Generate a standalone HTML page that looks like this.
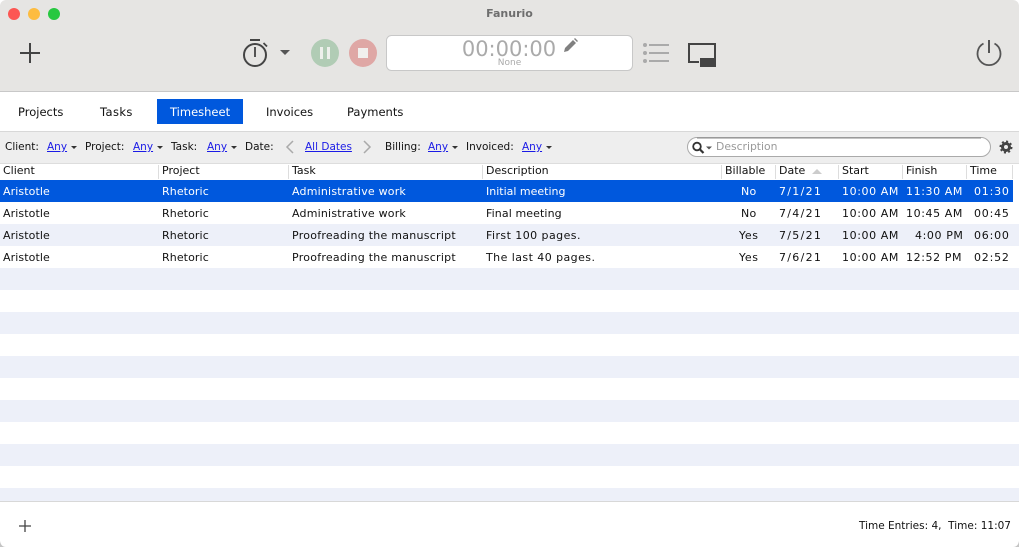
<!DOCTYPE html>
<html><head><meta charset="utf-8"><style>
html,body{margin:0;padding:0;background:#fff}
#a{position:relative;width:1019px;height:547px;overflow:hidden;background:#fff;font-family:"DejaVu Sans","Liberation Sans",sans-serif;font-size:11px;color:#111}
#a div,#a a{position:absolute;white-space:nowrap}
.t{line-height:14px}
.f{font-size:10.5px}
.b{font-size:11.5px}
a{color:#1a1ae6;text-decoration:underline}
.s{background:#edf0f9;left:0;width:1019px;height:22px}
.sep{width:1px;height:14px;top:165px;background:#ddd}
.tri{width:0;height:0;border-left:3px solid transparent;border-right:3px solid transparent;border-top:3px solid #333}
svg{position:absolute;overflow:visible}
.r{line-height:14px;font-size:11px}
.w{color:#fff}
.c1{left:3px;letter-spacing:.1px}.c2{left:162px;letter-spacing:.1px}
.c3{left:292px}.ad{letter-spacing:.2px}.pr{letter-spacing:.26px}
.c4{left:486px}
.no{left:741px;letter-spacing:.3px}.ye{left:739px;letter-spacing:.6px}
.c6{left:779px;letter-spacing:1.3px}
.c7{left:842px;letter-spacing:.6px}.c8{left:906px;letter-spacing:.6px}
.c9{left:974px;letter-spacing:.8px}
</style></head><body><div id="a">
<div style="left:0;top:0;width:1019px;height:91px;background:#e6e5e3;border-radius:6px 6px 0 0"></div>
<div style="left:0;top:91px;width:1019px;height:1px;background:#c8c8c8"></div>
<div style="left:0;width:100%;text-align:center;line-height:14px;top:7px;font-weight:bold;color:#6e6e6e;font-size:11px">Fanurio</div>
<div style="left:8px;top:8px;width:12px;height:12px;border-radius:50%;background:#fc5753"></div>
<div style="left:28px;top:8px;width:12px;height:12px;border-radius:50%;background:#fdbc40"></div>
<div style="left:48px;top:8px;width:12px;height:12px;border-radius:50%;background:#27c840"></div>
<svg style="left:0;top:0" width="1019" height="91">
<path d="M30 43v20M20 53h20" stroke="#444" stroke-width="2" fill="none"/>
<circle cx="255" cy="55" r="11" stroke="#444" stroke-width="2" fill="none"/>
<path d="M250 40h10" stroke="#444" stroke-width="2"/><path d="M255 47v10" stroke="#444" stroke-width="1.800"/><path d="M263.500 43l3.500 3.500" stroke="#444" stroke-width="1.800"/>
<path d="M280 50h10l-5 5z" fill="#555"/>
<circle cx="325" cy="53" r="14" fill="#b1ccb5"/><path d="M320 47h3v12h-3zM327 47h3v12h-3z" fill="#eef0ec"/>
<circle cx="363" cy="53" r="14" fill="#dfa7a5"/><rect x="358" y="48" width="10" height="10" fill="#f1efed"/>
<rect x="386.500" y="35.500" width="246" height="35" rx="5" fill="#fff" stroke="#c8c8c8"/>
<path d="M564 52l1-4 8-8 3 3-8 8zM574 39l1-1 3 3-1 1z" fill="#808080"/>
<circle cx="645" cy="45" r="2" fill="#aaa"/><circle cx="645" cy="53" r="2" fill="#aaa"/><circle cx="645" cy="61" r="2" fill="#aaa"/>
<path d="M649 45h20M649 53h20M649 61h20" stroke="#aaa" stroke-width="2"/>
<path d="M699 62h-10V44h26v15" stroke="#444" stroke-width="2" fill="none"/><rect x="700" y="58" width="16" height="9" fill="#444"/>
<path d="M983.500 43.500a11.500 11.500 0 1 0 11 0" stroke="#555" stroke-width="1.800" fill="none"/><path d="M989 40v13" stroke="#555" stroke-width="2"/>
</svg>
<div style="left:386px;top:36px;width:246px;text-align:center;font-size:21px;line-height:26px;color:#aaa">00:00:00</div>
<div style="left:387px;top:57px;width:245px;text-align:center;font-size:9px;line-height:12px;color:#aaa">None</div>

<div class="t b" style="left:18px;top:105px">Projects</div>
<div class="t b" style="left:100px;top:105px;letter-spacing:.4px">Tasks</div>
<div style="left:157px;top:99px;width:86px;height:25px;background:#0058dd"></div>
<div class="t b" style="left:170px;top:105px;color:#fff">Timesheet</div>
<div class="t b" style="left:266px;top:105px">Invoices</div>
<div class="t b" style="left:347px;top:105px">Payments</div>

<div style="left:0;top:131px;width:1019px;height:33px;background:#eeeeee;border-top:1px solid #d8d8d8;border-bottom:1px solid #ddd;box-sizing:border-box"></div>
<div class="t f" style="left:5px;top:140px">Client:</div><a class="t f" style="left:47px;top:140px">Any</a><div class="tri" style="left:71px;top:146px"></div>
<div class="t f" style="left:85px;top:140px">Project:</div><a class="t f" style="left:133px;top:140px">Any</a><div class="tri" style="left:157px;top:146px"></div>
<div class="t f" style="left:171px;top:140px">Task:</div><a class="t f" style="left:207px;top:140px">Any</a><div class="tri" style="left:231px;top:146px"></div>
<div class="t f" style="left:245px;top:140px">Date:</div>
<svg style="left:0;top:0" width="1019" height="164"><path d="M293 141l-6 6 6 6M364 141l6 6-6 6" stroke="#aaa" stroke-width="1.500" fill="none"/>
<rect x="687.500" y="137.500" width="303" height="19" rx="9.500" fill="#fff" stroke="#aaa"/>
<path d="M697 138h284" stroke="#888"/>
<circle cx="697" cy="146.500" r="3.800" stroke="#333" stroke-width="1.800" fill="none"/><path d="M700 149.500l3.500 3.500" stroke="#333" stroke-width="2.200"/><path d="M706 146.500h6l-3 3z" fill="#555"/>
<circle cx="1006" cy="147" r="3.500" stroke="#444" stroke-width="3" fill="none"/><circle cx="1006" cy="147" r="5.500" stroke="#444" stroke-width="2" stroke-dasharray="2 2.300" fill="none"/>
</svg>
<a class="t f" style="left:305px;top:140px">All Dates</a>
<div class="t f" style="left:385px;top:140px">Billing:</div><a class="t f" style="left:428px;top:140px">Any</a><div class="tri" style="left:452px;top:146px"></div>
<div class="t f" style="left:466px;top:140px">Invoiced:</div><a class="t f" style="left:522px;top:140px">Any</a><div class="tri" style="left:546px;top:146px"></div>
<div class="t" style="left:716px;top:140px;color:#999;font-size:10.800px">Description</div>

<div class="sep" style="left:158px"></div><div class="sep" style="left:288px"></div><div class="sep" style="left:482px"></div><div class="sep" style="left:721px"></div><div class="sep" style="left:775px"></div><div class="sep" style="left:838px"></div><div class="sep" style="left:902px"></div><div class="sep" style="left:966px"></div><div class="sep" style="left:1012px"></div>
<div class="t" style="left:3px;top:164px">Client</div><div class="t" style="left:162px;top:164px">Project</div><div class="t" style="left:292px;top:164px">Task</div><div class="t" style="left:486px;top:164px">Description</div><div class="t" style="left:725px;top:164px">Billable</div><div class="t" style="left:779px;top:164px">Date</div><div class="t" style="left:842px;top:164px">Start</div><div class="t" style="left:906px;top:164px">Finish</div><div class="t" style="left:970px;top:164px">Time</div>
<svg style="left:0;top:0" width="1019" height="180"><path d="M812 174l5-5 5 5z" fill="#ccc"/></svg>

<div style="left:0;top:180px;width:1013px;height:22px;background:#0058dd"></div>
<div class="s" style="top:224px"></div><div class="s" style="top:268px"></div><div class="s" style="top:312px"></div><div class="s" style="top:356px"></div><div class="s" style="top:400px"></div><div class="s" style="top:444px"></div><div class="s" style="top:488px;height:13px"></div>
<div style="left:0;top:501px;width:1019px;height:1px;background:#d8d8d8"></div>

<div class="r w c1" style="top:185px">Aristotle</div><div class="r w c2" style="top:185px">Rhetoric</div><div class="r w c3 ad" style="top:185px">Administrative work</div><div class="r w c4" style="top:185px">Initial meeting</div><div class="r w no" style="top:185px">No</div><div class="r w c6" style="top:185px">7/1/21</div><div class="r w c7" style="top:185px">10:00 AM</div><div class="r w c8" style="top:185px">11:30 AM</div><div class="r w c9" style="top:185px">01:30</div>
<div class="r c1" style="top:207px">Aristotle</div><div class="r c2" style="top:207px">Rhetoric</div><div class="r c3 ad" style="top:207px">Administrative work</div><div class="r c4" style="top:207px;letter-spacing:.1px">Final meeting</div><div class="r no" style="top:207px">No</div><div class="r c6" style="top:207px">7/4/21</div><div class="r c7" style="top:207px">10:00 AM</div><div class="r c8" style="top:207px">10:45 AM</div><div class="r c9" style="top:207px">00:45</div>
<div class="r c1" style="top:229px">Aristotle</div><div class="r c2" style="top:229px">Rhetoric</div><div class="r c3 pr" style="top:229px">Proofreading the manuscript</div><div class="r c4" style="top:229px;letter-spacing:.44px">First 100 pages.</div><div class="r ye" style="top:229px">Yes</div><div class="r c6" style="top:229px">7/5/21</div><div class="r c7" style="top:229px">10:00 AM</div><div class="r" style="left:915px;top:229px;letter-spacing:.6px">4:00 PM</div><div class="r c9" style="top:229px">06:00</div>
<div class="r c1" style="top:251px">Aristotle</div><div class="r c2" style="top:251px">Rhetoric</div><div class="r c3 pr" style="top:251px">Proofreading the manuscript</div><div class="r c4" style="top:251px;letter-spacing:.44px">The last 40 pages.</div><div class="r ye" style="top:251px">Yes</div><div class="r c6" style="top:251px">7/6/21</div><div class="r c7" style="top:251px">10:00 AM</div><div class="r c8" style="top:251px">12:52 PM</div><div class="r c9" style="top:251px">02:52</div>

<svg style="left:0;top:0" width="1019" height="547"><path d="M25 520v12M19 526h12" stroke="#444" stroke-width="1.300" fill="none"/>
<path d="M0 541q1 6 6 6H0zM1019 541q-1 6-6 6h6z" fill="#c4c4c4"/></svg>
<div class="t f" style="right:8px;top:519px">Time Entries: 4,&nbsp; Time: 11:07</div>
</div></body></html>
